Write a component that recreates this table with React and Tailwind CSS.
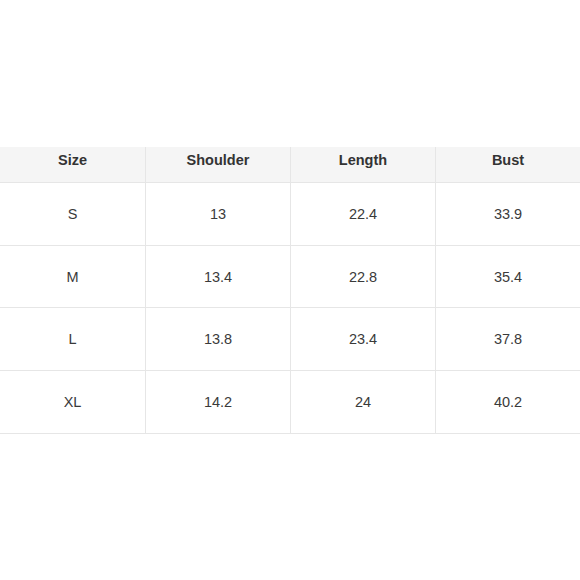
const headers = ['Size', 'Shoulder', 'Length', 'Bust'];

const rows = [
  ['S', '13', '22.4', '33.9'],
  ['M', '13.4', '22.8', '35.4'],
  ['L', '13.8', '23.4', '37.8'],
  ['XL', '14.2', '24', '40.2'],
];

export default function App() {
  return (
    <div className="w-[580px] h-[580px] bg-white pt-[147px] font-['Liberation_Sans',Arial,sans-serif]">
      <div className="grid grid-cols-[146px_145px_145px_144px] border-b border-[#e6e6e6]">
        {headers.map((h, i) => (
          <div
            key={h}
            className={`h-[36px] bg-[#f5f5f5] border-b border-[#e6e6e6] flex items-center justify-center pb-[7px] text-[14.5px] font-bold text-[#333] ${i < 3 ? 'border-r' : ''}`}
          >
            {h}
          </div>
        ))}
        {rows.map((row, r) =>
          row.map((cell, i) => (
            <div
              key={`${r}-${i}`}
              className={`h-[62.5px] flex items-center justify-center pt-[3px] text-[14.5px] text-[#3a3a3a] border-[#e6e6e6] ${i < 3 ? 'border-r' : ''} ${r < 3 ? 'border-b' : ''}`}
            >
              {cell}
            </div>
          ))
        )}
      </div>
    </div>
  );
}
